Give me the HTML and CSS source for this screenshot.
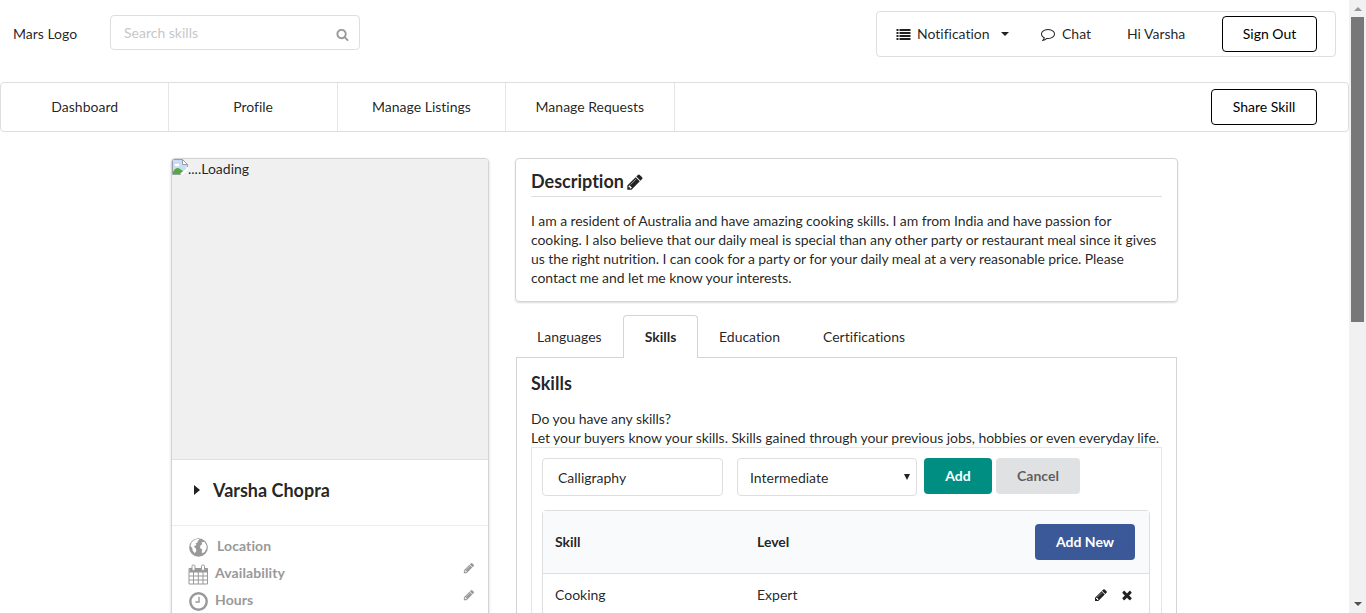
FILE: index.html
```html
<!DOCTYPE html>
<html lang="en">
<head>
<meta charset="utf-8">
<title>Profile</title>
<link rel="stylesheet" href="styles.css">
</head>
<body>
<svg class="sprite" aria-hidden="true">
  <symbol id="pencil" viewBox="0 0 1792 1792"><path d="M491 1536l91-91-235-235-91 91v107h128v128h107zm523-928q0-22-22-22-10 0-17 7l-542 542q-7 7-7 17 0 22 22 22 10 0 17-7l542-542q7-7 7-17zm-54-192l416 416-832 832h-416v-416zm683 96q0 53-37 90l-166 166-416-416 166-165q36-38 90-38 53 0 91 38l235 234q37 39 37 91z"/></symbol>
</svg>
<div class="window">
  <div class="page">
    <header class="topbar">
      <span class="logo">Mars Logo</span>
      <div class="search">
        <span class="placeholder">Search skills</span>
        <svg class="icon-search" viewBox="0 0 1792 1792"><path d="M1216 832q0-185-131.5-316.5t-316.5-131.5-316.5 131.5-131.5 316.5 131.5 316.5 316.5 131.5 316.5-131.5 131.5-316.5zm512 832q0 52-38 90t-90 38q-54 0-90-38l-343-342q-179 124-399 124-143 0-273.5-55.5t-225-150-150-225-55.5-273.5 55.5-273.5 150-225 225-150 273.5-55.5 273.5 55.5 225 150 150 225 55.5 273.5q0 220-124 399l343 343q37 37 37 90z"/></svg>
      </div>
      <div class="account">
        <svg class="icon-list" viewBox="0 0 14 11"><path d="M0 0h2v2H0zM3 0h11v2H3zM0 3h2v2H0zM3 3h11v2H3zM0 6h2v2H0zM3 6h11v2H3zM0 9h2v2H0zM3 9h11v2H3z"/></svg>
        <span class="notification">Notification</span>
        <svg class="icon-caret" viewBox="0 0 8 4"><path d="M0 0h8L4 4z"/></svg>
        <svg class="icon-chat" viewBox="0 0 1792 1792"><path d="M896 384q-204 0-381.5 69.5t-282 187.5-104.5 255q0 112 71.5 213.5t201.5 175.5l87 50-27 96q-24 91-70 172 152-63 275-171l43-38 57 6q69 8 130 8 204 0 381.5-69.5t282-187.5 104.5-255-104.5-255-282-187.5-381.5-69.5zm896 512q0 174-120 321.5t-326 233-450 85.5q-70 0-145-8-198 175-460 242-49 14-114 22h-5q-15 0-27-10.5t-16-27.5v-1q-3-4-.5-12t2-10 4.5-9.5l6-9 7-8.5 8-9q7-8 31-34.5t34.500-38 31-39.5 32.5-51 27-59 26-76q-157-89-247.5-220t-90.5-281q0-174 120-321.5t326-233 450-85.5 450 85.5 326 233 120 321.5z"/></svg>
        <span class="chat">Chat</span>
        <span class="greeting">Hi Varsha</span>
        <button class="outline signout">Sign Out</button>
      </div>
    </header>

    <nav class="nav">
      <a>Dashboard</a><a>Profile</a><a>Manage Listings</a><a>Manage Requests</a>
      <button class="outline share">Share Skill</button>
    </nav>

    <div class="content">
      <aside class="card">
        <div class="photo">
          <svg class="broken" viewBox="0 0 16 16"><path d="M.5.5h10l5 5v5L9 15.500H.5z" fill="#c9dbf5" stroke="#9aa0a8"/><path d="M10.500.5v5h5z" fill="#fff" stroke="#9aa0a8"/><ellipse cx="5" cy="6" rx="2.500" ry="1.300" fill="#fff"/><path d="M1 15v-2c2-4 5-5 7-3l3 2-3 3z" fill="#55a83c"/><path d="M15.500 8v2L9 15.500" fill="none" stroke="#fff" stroke-width="2"/></svg><span>....Loading</span>
        </div>
        <div class="name">
          <svg class="icon-right" viewBox="0 0 6 10"><path d="M0 0l6 5-6 5z"/></svg>
          <h2>Varsha Chopra</h2>
        </div>
        <ul class="facts">
          <li>
            <svg class="fact-icon" viewBox="0 0 20 20"><circle cx="10" cy="10" r="8.900"/><path d="M3.500 5l3-2.500 3-.8 1.500.8-2 1.200.5 1.300-2.200 1 .7 1.700-2.500 1.300L7.500 11l.5 2-1.500 2.500L4.500 13 4 10.500 2.300 8.500zM13 5l2.500-.5 2 3 .3 3-1.800 3.500-2 1.500-1-1 .5-2.500-2-1.500.3-2.500 1.700-1z" fill="#fff"/></svg>
            <span class="wide">Location</span>
          </li>
          <li>
            <svg class="fact-icon" viewBox="0 0 20 21"><path d="M.5 4.500h18.500v15.500H.5zM.5 8h18.500M.5 12h18.500M.5 16h18.500M5 8v12M9.800 8v12M14.500 8v12" fill="none" stroke="#999" stroke-width="1"/><path d="M1 4h18v4H1z"/><rect x="3.500" y="1" width="3" height="5.500" rx="1.300" fill="#fff" stroke="#999"/><rect x="13" y="1" width="3" height="5.500" rx="1.300" fill="#fff" stroke="#999"/></svg>
            <span>Availability</span>
            <svg class="edit"><use href="#pencil"/></svg>
          </li>
          <li>
            <svg class="fact-icon" viewBox="0 0 20 20"><circle cx="10" cy="10" r="7.800" fill="none" stroke="#999" stroke-width="2.300"/><path d="M10.500 5.500v5H7" fill="none" stroke="#999" stroke-width="1.300"/></svg>
            <span>Hours</span>
            <svg class="edit"><use href="#pencil"/></svg>
          </li>
        </ul>
      </aside>

      <main class="details">
        <section class="description">
          <h2>Description<svg class="edit"><use href="#pencil"/></svg></h2>
          <p>I am a resident of Australia and have amazing cooking skills. I am from India and have passion for<br>cooking. I also believe that our daily meal is special than any other party or restaurant meal since it gives<br>us the right nutrition. I can cook for a party or for your daily meal at a very reasonable price. Please<br>contact me and let me know your interests.</p>
        </section>

        <div class="tabs">
          <a class="languages">Languages</a><a class="active">Skills</a><a class="education">Education</a><a>Certifications</a>
        </div>
        <section class="panel">
          <h2>Skills</h2>
          <p>Do you have any skills?<br>Let your buyers know your skills. Skills gained through your previous jobs, hobbies or even everyday life.</p>
          <div class="editor">
            <div class="form">
              <div class="field">Calligraphy</div>
              <div class="field select"><span>Intermediate</span><svg viewBox="0 0 6 6"><path d="M0 0h6L3 6z"/></svg></div>
              <button class="btn teal">Add</button>
              <button class="btn grey">Cancel</button>
            </div>
            <div class="table">
              <div class="row head"><span>Skill</span><span>Level</span><button class="btn blue">Add New</button></div>
              <div class="row"><span>Cooking</span><span>Expert</span>
                <div class="actions">
                  <svg><use href="#pencil"/></svg>
                  <svg viewBox="0 0 1792 1792"><path d="M1490 1322q0 40-28 68l-136 136q-28 28-68 28t-68-28l-294-294-294 294q-28 28-68 28t-68-28l-136-136q-28-28-28-68t28-68l294-294-294-294q-28-28-28-68t28-68l136-136q28-28 68-28t68 28l294 294 294-294q28-28 68-28t68 28l136 136q28 28 28 68t-28 68l-294 294 294 294q28 28 28 68z"/></svg>
                </div>
              </div>
            </div>
          </div>
        </section>
      </main>
    </div>
  </div>
  <div class="scrollbar">
    <svg class="up" viewBox="0 0 8 4"><path d="M4 0l4 4H0z"/></svg>
    <div class="thumb"></div>
    <svg class="down" viewBox="0 0 8 4"><path d="M0 0h8L4 4z"/></svg>
  </div>
</div>
</body>
</html>
```

FILE: styles.css
```css
* { box-sizing: border-box; }
body { margin: 0; font: 14px/19px Lato, "Liberation Sans", sans-serif; font-variant-ligatures: none; color: rgba(0, 0, 0, .87); background: #fff; }
h2, p, ul { margin: 0; padding: 0; }
h2 { font-size: 18px; line-height: 23px; font-weight: 700; }
svg { flex: none; fill: currentColor; }
button { font: inherit; font-variant-ligatures: none; margin: 0; padding: 0 0 2px; flex: none; white-space: nowrap; }
.sprite { display: none; }
.window { display: flex; height: 613px; overflow: hidden; }
.page { width: 1349px; flex: none; }

.topbar { display: flex; height: 82px; padding: 11px 13px 0; }
.logo { width: 97px; padding-top: 13px; }
.search { display: flex; align-items: center; justify-content: space-between; width: 250px; height: 35px; margin-top: 4px; padding: 0 10px 0 13px; border: 1px solid #dededf; border-radius: 4px; }
.placeholder { color: #c7c7c7; padding-bottom: 1px; }
.icon-search { width: 13px; height: 13px; margin-top: 3px; color: #999; }
.account { display: flex; align-items: center; width: 460px; height: 46px; margin-left: auto; padding: 0 18px 0 19px; border: 1px solid #dededf; border-radius: 4px; }
.account span { padding-bottom: 2px; }
.icon-list { width: 15px; height: 11px; margin-right: 6px; }
.notification { width: 84px; }
.icon-caret { width: 8px; height: 4px; margin-right: 32px; }
.icon-chat { width: 14px; height: 14px; margin-right: 7px; }
.chat { width: 65px; }
.outline { height: 36px; border: 1px solid #000; border-radius: 4px; background: #fff; color: #000; }
.signout { width: 95px; margin-left: auto; }

.nav { display: flex; align-items: center; height: 50px; padding-right: 31px; border: 1px solid #dededf; border-radius: 4px; }
.nav a { width: 168.4px; height: 48px; line-height: 48px; text-align: center; border-right: 1px solid #e6e6e6; }
.share { width: 106px; margin-left: auto; }

.content { display: flex; align-items: flex-start; gap: 26px; padding: 26px 171px 0; }
.card { width: 318px; height: 520px; flex: none; border: 1px solid #d4d4d5; border-radius: 4px; overflow: hidden; box-shadow: 0 1px 3px #d4d4d5; }
.photo { display: flex; height: 301px; background: #f0f0f0; border-bottom: 1px solid #e0e0e0; }
.broken { width: 16px; height: 16px; }
.name { display: flex; align-items: center; gap: 13px; height: 66px; padding: 0 0 5px 22px; border-bottom: 1px solid #ececec; }
.icon-right { width: 6px; height: 10px; }
.facts { list-style: none; padding: 8px 13px 0 16px; color: #999; font-weight: 700; }
.facts li { display: flex; align-items: center; height: 27px; }
.facts span { padding: 0 0 4px 6px; letter-spacing: .1px; }
.facts .wide { padding-left: 8px; }
.fact-icon { width: 21px; height: 21px; }
.facts .edit { width: 12px; height: 12px; margin: 0 0 14px auto; }

.details { width: 663px; flex: none; }
.description { height: 144px; padding: 11px 15px; border: 1px solid #d4d4d5; border-radius: 4px; box-shadow: 0 1px 2px #dcdcdc; }
.description h2 { display: flex; align-items: center; gap: 2px; height: 27px; padding-bottom: 3px; border-bottom: 1px solid #dededf; }
.description .edit { width: 18px; height: 18px; }
.description p { padding-top: 14px; white-space: nowrap; letter-spacing: -.08px; }
.tabs { display: flex; height: 43px; margin-top: 13px; padding-left: 1px; position: relative; }
.tabs a { padding: 12px 21px 0; }
.tabs .active { width: 75px; border: 1px solid #d4d4d5; border-bottom: 0; border-radius: 4px 4px 0 0; font-weight: 700; background: #fff; padding: 11px 0 0; text-align: center; }
.tabs .languages { width: 107px; }
.tabs .education { width: 104px; }
.panel { width: 661px; height: 300px; margin: -1px 0 0 1px; padding: 14px 14px 0; border: 1px solid #d4d4d5; }
.panel p { height: 53px; padding-top: 14px; white-space: nowrap; letter-spacing: -.05px; }
.editor { height: 210px; margin-top: -1px; padding: 10px 11px 0 10px; border: 1px solid #e6e6e7; }
.form { display: flex; }
.field { width: 181px; height: 38px; padding: 9px 15px 0; border: 1px solid #dededf; border-radius: 4px; line-height: 19px; }
.select { display: flex; justify-content: space-between; width: 180px; margin: 0 7px 0 14px; padding: 9px 6px 0 12px; }
.select svg { width: 6px; height: 6px; margin-top: 6px; }
.btn { height: 36px; border: 0; border-radius: 4px; font-weight: 700; color: #fff; }
.teal { width: 68px; background: #008e83; }
.grey { width: 84px; margin-left: 4px; background: #e0e1e2; color: rgba(0, 0, 0, .6); }
.table { height: 140px; margin-top: 14px; border: 1px solid #dededf; border-radius: 4px; }
.row { display: grid; grid-template-columns: 202px 1fr auto; align-items: center; height: 43px; padding: 0 14px 0 12px; }
.row span { padding-bottom: 2px; }
.head { height: 63px; background: #f9fafb; border-bottom: 1px solid #dededf; font-weight: 700; }
.blue { width: 100px; background: #3b5998; }
.actions { display: flex; gap: 12px; padding: 0 1px 2px 0; }
.actions svg { width: 14px; height: 14px; }

.scrollbar { display: flex; flex-direction: column; align-items: center; width: 17px; background: #f1f1f1; }
.up { width: 8px; height: 4px; margin: 7px 0 6px; color: #969696; }
.thumb { width: 13px; height: 305px; background: #787878; }
.down { width: 8px; height: 4px; margin: auto 0 7px; color: #505050; }
```
